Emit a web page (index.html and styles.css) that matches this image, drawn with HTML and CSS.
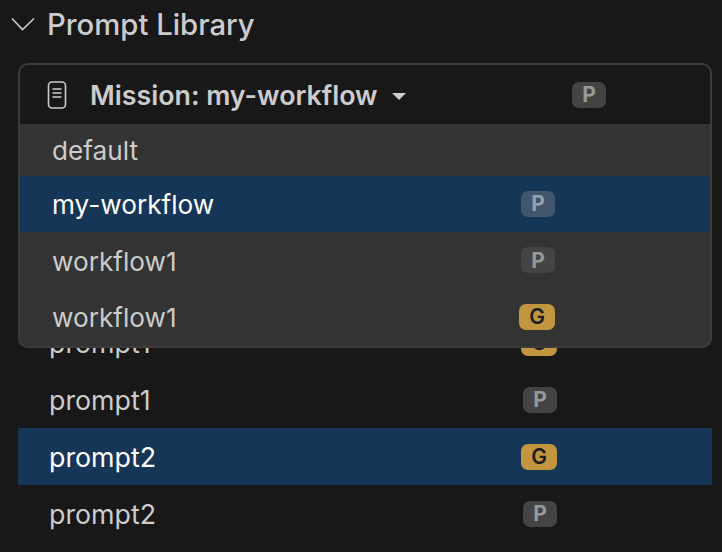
FILE: index.html
```html
<!DOCTYPE html>
<html lang="en">
<head>
    <meta charset="UTF-8">
    <meta name="viewport" content="width=device-width, initial-scale=1.0">
    <title>Prompt Library</title>
    <link rel="stylesheet" href="styles.css">
</head>
<body>
    <div class="section-title">
        <svg class="chevron" width="24" height="14" viewBox="0 0 24 14">
            <path d="M1 1.5 L11.5 12.5 L23 1.5" fill="none" stroke="#cccccc" stroke-width="1.6"/>
        </svg>
        <span>Prompt Library</span>
    </div>

    <div class="mission">
        <div class="mission-head">
            <svg class="doc-icon" width="20" height="28" viewBox="0 0 20 28">
                <rect x="1.5" y="1" width="17" height="26" rx="3.5" fill="none" stroke="#cccccc" stroke-width="1.6"/>
                <path d="M5.5 8 H14.5 M5.5 12 H14.5 M5.5 16 H14.5" stroke="#cccccc" stroke-width="1.6"/>
            </svg>
            <span class="mission-name">Mission: my-workflow</span>
            <span class="caret"></span>
            <span class="badge badge-p">P</span>
        </div>

        <!-- menu lies over the list -->
        <div class="menu">
            <div class="menu-item first"><span class="menu-label">default</span></div>
            <div class="menu-item active"><span class="menu-label">my-workflow</span> <span class="badge badge-p">P</span></div>
            <div class="menu-item"><span class="menu-label">workflow1</span> <span class="badge badge-p">P</span></div>
            <div class="menu-item"><span class="menu-label">workflow1</span> <span class="badge badge-g">G</span></div>
        </div>
    </div>

    <div class="prompt-list">
        <div class="prompt-row">prompt1 <span class="badge badge-g">G</span></div>
        <div class="prompt-row">prompt1 <span class="badge badge-p">P</span></div>
        <div class="prompt-row active">prompt2 <span class="badge badge-g">G</span></div>
        <div class="prompt-row">prompt2 <span class="badge badge-p">P</span></div>
    </div>
</body>
</html>
```

FILE: styles.css
```css
html, body {
    height: 100%;
}

body {
    margin: 0;
    overflow: hidden;
    background-color: #181818;
    color: #cccccc;
    font-family: Inter, "Noto Sans", sans-serif;
    font-size: 26.8px;
}

.section-title {
    display: flex;
    align-items: center;
    gap: 12px;
    height: 48px;
    padding-left: 11px;
    font-size: 29.3px;
    font-weight: 500;
}

.mission {
    position: relative;
    z-index: 1;
    margin: 15px 10px 0 18px;
    height: 285px;
    box-sizing: border-box;
    border: 2px solid #3c3c3c;
    border-radius: 10px;
}

.mission-head {
    display: flex;
    align-items: center;
    height: 59px;
    padding: 0 104px 0 27px;
    font-weight: 600;
}

.mission-name {
    margin-left: 23px;
}

.caret {
    margin-left: 14px;
    margin-top: 3px;
    border-left: 7px solid transparent;
    border-right: 7px solid transparent;
    border-top: 7px solid #cccccc;
}

.mission-head .badge {
    margin-left: auto;
}

.menu {
    position: absolute;
    top: 59px;
    left: -2px;
    right: -2px;
    bottom: -2px;
    overflow: hidden;
    background-color: #333333;
    border: 2px solid #3c3c3c;
    border-top: none;
    border-radius: 0 0 10px 10px;
    box-sizing: border-box;
    font-size: 26.2px;
}

.menu-item {
    display: flex;
    align-items: center;
    justify-content: space-between;
    height: 56.5px;
    padding: 0 155px 0 32px;
}

.menu-item.first {
    height: 51.5px;
}

.menu-item.active {
    background-color: #163657;
    color: #ffffff;
}

.menu-label {
    margin-top: 2px;
}

.prompt-list {
    margin: -34px 10px 0 18px;
}

.prompt-row {
    display: flex;
    align-items: center;
    justify-content: space-between;
    height: 57px;
    padding: 0 155px 0 31px;
}

.prompt-row.active {
    background-color: #163657;
    color: #ffffff;
}

.badge {
    display: flex;
    align-items: center;
    justify-content: center;
    width: 34px;
    height: 26px;
    border-radius: 7px;
    font-size: 21px;
    font-weight: 700;
}

.badge-p {
    background-color: #444444;
    color: #999999;
}

.active .badge-p {
    background-color: #44566b;
    color: #93a3b5;
}

.badge-g {
    width: 36px;
    background-color: #c2963f;
    color: #1d1d1d;
    font-weight: 600;
}
```
